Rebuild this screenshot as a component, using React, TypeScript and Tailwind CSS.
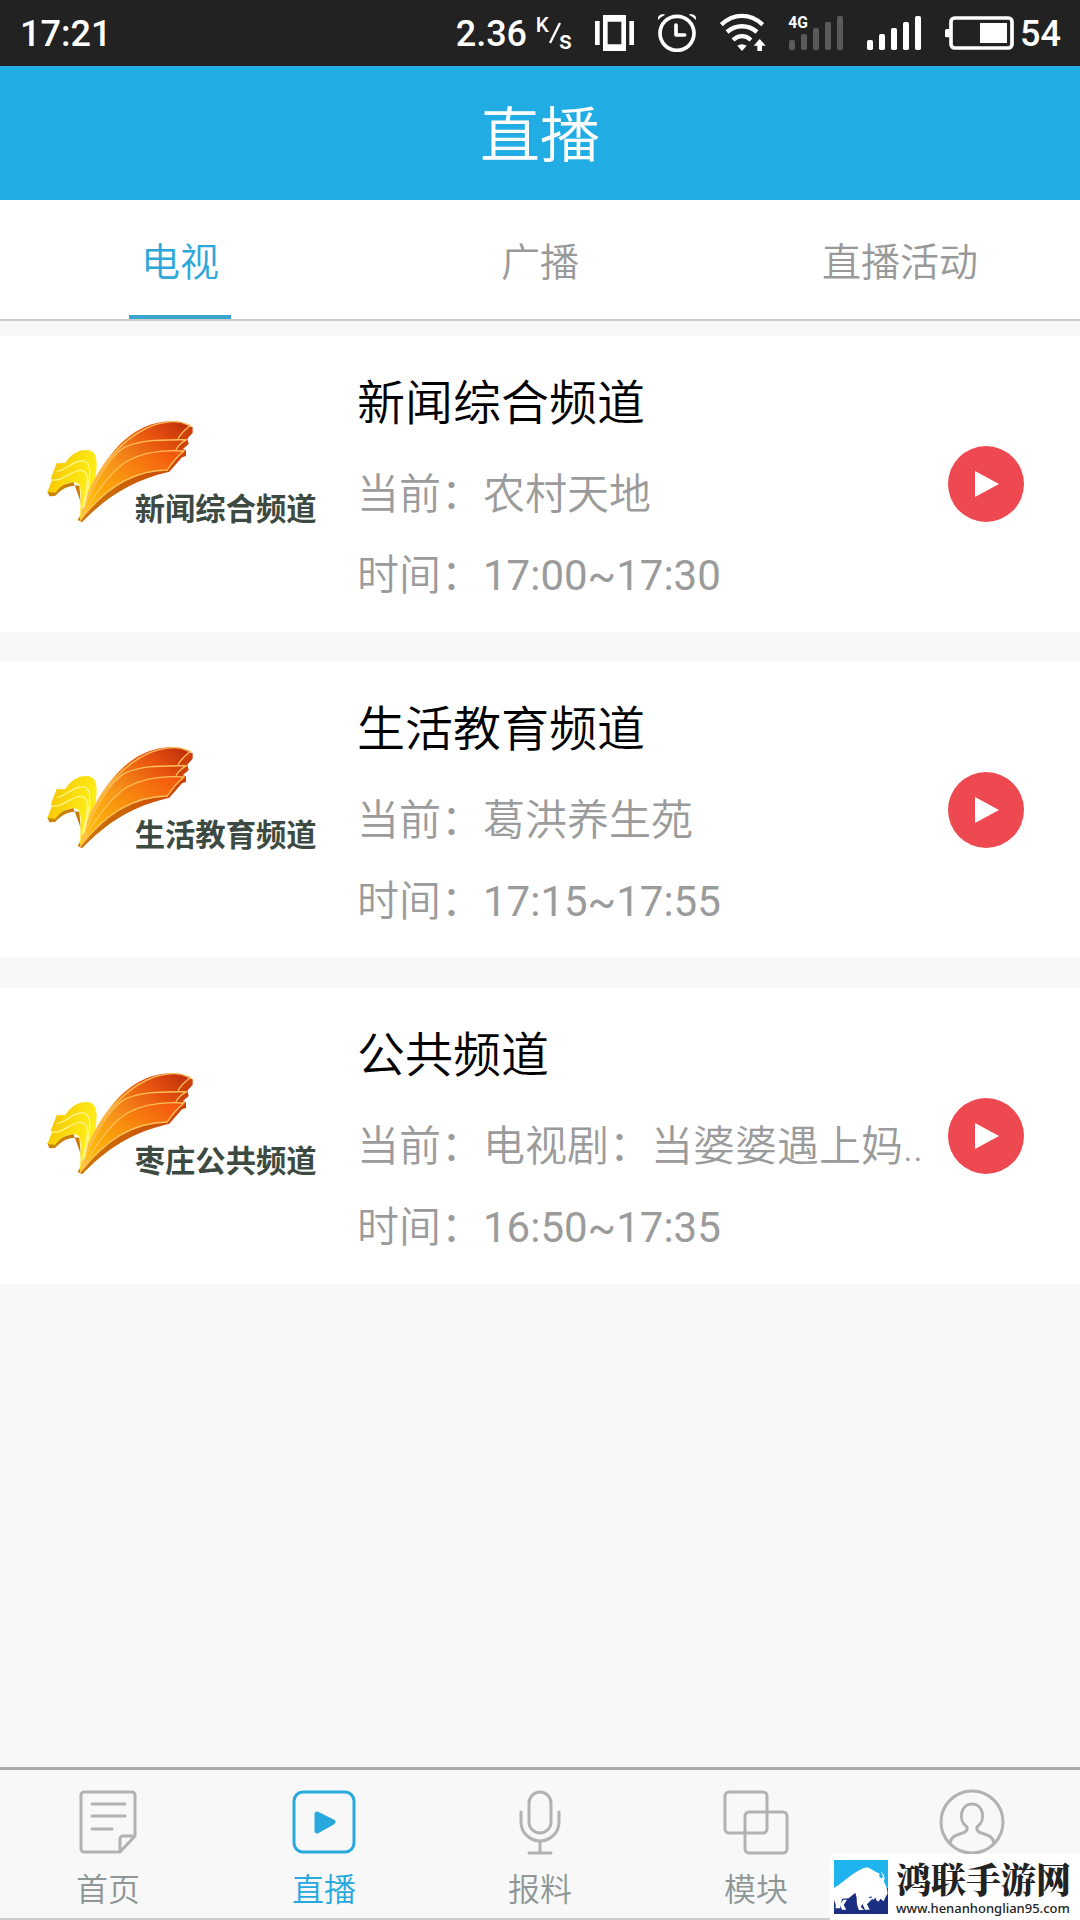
import React, { useState } from 'react';

type Channel = {
  name: string;
  logoText: string;
  current: string;
  time: string;
};

const channels: Channel[] = [
  { name: '新闻综合频道', logoText: '新闻综合频道', current: '农村天地', time: '17:00~17:30' },
  { name: '生活教育频道', logoText: '生活教育频道', current: '葛洪养生苑', time: '17:15~17:55' },
  { name: '公共频道', logoText: '枣庄公共频道', current: '电视剧：当婆婆遇上妈..', time: '16:50~17:35' },
];

const tabs = ['电视', '广播', '直播活动'];

const SignalBars: React.FC<{ color: string; label?: string }> = ({ color, label }) => (
  <svg className="w-[54px] h-[36px] overflow-visible" viewBox="0 0 162 108">
    <g fill={color}>
      <rect x="0" y="75" width="18" height="30" rx="5" />
      <rect x="36" y="57" width="18" height="48" rx="5" />
      <rect x="72" y="39" width="18" height="66" rx="5" />
      <rect x="108" y="21" width="18" height="84" rx="5" />
      <rect x="144" y="3" width="18" height="102" rx="5" />
    </g>
    {label && (
      <text x="-2" y="38" fill="#fff" fontSize="47" fontWeight="700" fontFamily="Roboto, sans-serif">
        {label}
      </text>
    )}
  </svg>
);

const StatusBar: React.FC = () => (
  <div className="h-[66px] bg-[#222222] text-white flex items-center justify-between pl-5 pr-[19px] font-medium text-[36px] leading-[66px]">
    <span className="pt-px">17:21</span>
    <div className="flex items-center gap-6">
      <div className="flex items-center gap-2">
        <span className="pt-px">2.36</span>
        <svg className="w-[36px] h-[36px] overflow-visible" viewBox="0 0 108 108" fill="#fff" fontFamily="Roboto, sans-serif">
          <text x="2" y="52" fontSize="62" fontWeight="500">K</text>
          <path d="M45 84L75 24" stroke="#fff" strokeWidth="7" />
          <text x="72" y="101" fontSize="76" fontWeight="500">s</text>
        </svg>
      </div>
      {/* Vibrate */}
      <svg className="w-[39px] h-[36px]" viewBox="0 0 117 108" fill="#fff">
        <rect x="0" y="18" width="14" height="72" />
        <rect x="103" y="18" width="14" height="72" />
        <path fillRule="evenodd" d="M24 0h69v108H24zM38 20v68h41V20z" />
      </svg>
      {/* Alarm */}
      <svg className="w-[38px] h-[38px]" viewBox="0 0 114 114" fill="none" stroke="#fff">
        <circle cx="57" cy="58" r="51" strokeWidth="11" />
        <path d="M54 33v30h26" strokeWidth="11" strokeLinecap="round" strokeLinejoin="round" />
        <path d="M0 18V9Q4 1 14 0L22 2Q8 8 0 18ZM114 18V9Q110 1 100 0L92 2Q106 8 114 18Z" fill="#fff" stroke="none" />
      </svg>
      {/* Wifi */}
      <svg className="w-[45px] h-[38px] overflow-visible" viewBox="0 0 135 114" fill="none" stroke="#fff" strokeWidth="13">
        <path d="M4 32C41-3 91-3 128 32" />
        <path d="M21 54C48 31 84 31 111 54" />
        <path d="M39 78C56 63 76 63 93 78" />
        <path d="M52 95Q66 86 80 95L66 111Z" fill="#fff" stroke="none" />
        <path d="M119 75L137 95H126V111H112V95H101Z" fill="#fff" stroke="none" />
      </svg>
      <SignalBars color="#5a5a5a" label="4G" />
      <SignalBars color="#ffffff" />
      <div className="flex items-center gap-[6px]">
        <svg className="w-[69px] h-[34px]" viewBox="0 0 207 102" fill="#fff">
          <rect x="18" y="6" width="183" height="90" rx="11" fill="none" stroke="#fff" strokeWidth="11" />
          <rect x="0" y="39" width="16" height="25" rx="5" />
          <rect x="105" y="21" width="81" height="60" />
        </svg>
        <span className="pt-px">54</span>
      </div>
    </div>
  </div>
);

const ChannelLogo: React.FC<{ text: string }> = ({ text }) => (
  <svg className="w-[310px] h-[150px] shrink-0" viewBox="0 0 930 450">
    <defs>
      <linearGradient id="wing" x1="0" y1="1" x2="1" y2="0">
        <stop offset="0" stopColor="#ffd400" />
        <stop offset="0.45" stopColor="#f7921a" />
        <stop offset="0.75" stopColor="#e8540f" />
        <stop offset="1" stopColor="#b82a0c" />
      </linearGradient>
      <linearGradient id="wingFront" x1="0" y1="1" x2="1" y2="0">
        <stop offset="0" stopColor="#ffcf00" />
        <stop offset="0.5" stopColor="#f9930f" />
        <stop offset="1" stopColor="#f2500f" />
      </linearGradient>
      <linearGradient id="tail" x1="0" y1="0" x2="1" y2="0.5">
        <stop offset="0" stopColor="#f5bd00" />
        <stop offset="0.6" stopColor="#fbe010" />
        <stop offset="1" stopColor="#fff21a" />
      </linearGradient>
      <linearGradient id="edge" x1="0" y1="0" x2="1" y2="0">
        <stop offset="0" stopColor="#c98a08" />
        <stop offset="1" stopColor="#cf3d08" />
      </linearGradient>
    </defs>
    {/* Shaded lower edge */}
    <path fill="url(#edge)" d="M52 274L58 289L75 288C98 265 118 255 148 257L155 340L143 360L156 367C235 285 310 240 418 215L456 172L468 168V150L458 148L476 132L472 116L488 98V82L470 76L400 180L150 300L130 245L75 262Z" />
    {/* Tail */}
    <path fill="url(#tail)" d="M80 190L106 189C125 156 160 143 184 153C204 163 202 196 195 245L150 362C151 325 154 285 150 258C143 238 100 244 76 278L52 276L66 240L62 236Z" />
    {/* Wing */}
    <path fill="url(#wing)" d="M150 362C158 300 196 220 246 160C300 90 378 54 452 66L482 76C468 87 452 100 446 115L470 118C456 126 444 138 438 149L462 153C445 167 425 190 412 211C310 217 240 255 150 362Z" />
    <path fill="url(#wingFront)" d="M150 362C180 300 238 216 292 183C342 155 395 148 462 153C445 167 425 190 412 211C310 211 225 262 150 362Z" />
    <g fill="none" stroke="#ffc05a" strokeWidth="4">
      <path d="M154 340C175 265 213 201 250 162C310 96 385 55 455 67L480 77C466 88 452 100 444 116" />
      <path d="M156 342C190 250 238 170 282 143C335 118 390 120 470 119C456 126 444 138 438 149" />
      <path d="M154 355C190 290 240 215 292 183C342 155 395 148 462 153C445 167 425 190 412 210C310 211 225 262 150 362" />
    </g>
    <g fill="none" stroke="#fff68a" strokeWidth="4">
      <path d="M80 214C104 213 122 188 150 183C190 177 184 225 162 320" />
      <path d="M62 240C105 245 120 211 153 211C180 213 176 240 158 325" />
    </g>
    <text x="314" y="361" fontSize="91" fontWeight="700" fill="#3d4a42" fontFamily="'Noto Sans CJK SC', sans-serif">
      {text}
    </text>
  </svg>
);

const ChannelCard: React.FC<{ channel: Channel }> = ({ channel }) => (
  <article className="bg-white flex pl-[30px] pr-14">
    <div className="pt-16">
      <ChannelLogo text={channel.logoText} />
    </div>
    <div className="flex-1 min-w-0 pl-[17px] pt-8 pb-4 whitespace-nowrap">
      <h2 className="text-[48px] leading-[72px] mb-[14px] text-black">{channel.name}</h2>
      <p className="text-[42px] leading-[81px] text-[#9b9b9b]">当前：{channel.current}</p>
      <p className="text-[42px] leading-[81px] text-[#9b9b9b]">
        时间：<span className="font-normal">{channel.time}</span>
      </p>
    </div>
    <button aria-label={`播放${channel.name}`} className="self-center shrink-0 w-[76px] h-[76px] rounded-full bg-[#ee4850]">
      <svg className="w-full h-full" viewBox="0 0 76 76">
        <path d="M27 25L51 38L27 51Z" fill="#fff" />
      </svg>
    </button>
  </article>
);

const navItems = [
  {
    label: '首页',
    icon: (
      <>
        <path d="M59 46V5a3 3 0 00-3-3H8a3 3 0 00-3 3v54a3 3 0 003 3h36L59 46H47a3 3 0 00-3 3v13" />
        <path d="M16 14h33M16 26h33M16 39h20" strokeLinecap="round" />
      </>
    ),
  },
  {
    label: '直播',
    icon: (
      <>
        <rect x="2" y="2" width="60" height="60" rx="9" />
        <path d="M25 24L41 32L25 41Z" fill="currentColor" strokeWidth="5" />
      </>
    ),
  },
  {
    label: '报料',
    icon: (
      <>
        <rect x="21" y="2" width="22" height="41" rx="11" />
        <path d="M13 22v10a19 19 0 0038 0V22M32 52v11M21 63h22" strokeLinecap="round" />
      </>
    ),
  },
  {
    label: '模块',
    icon: (
      <>
        <rect x="1" y="2" width="42" height="41" rx="4" />
        <rect x="21" y="22" width="42" height="41" rx="4" />
      </>
    ),
  },
  {
    label: '我的',
    icon: (
      <>
        <circle cx="32" cy="32" r="31" />
        <path d="M10 53C12 41 29 46 27 37C18 31 20 14 32 14S46 31 37 37C35 46 52 41 54 53" />
      </>
    ),
  },
];

const SiteBadge: React.FC = () => (
  <a href="#" className="absolute right-0 bottom-0 w-[250px] h-[66px] bg-white flex items-center gap-2 pl-1 text-[#222222]">
    <svg className="w-[54px] h-[54px] shrink-0" viewBox="0 0 162 162">
      <path fill="#1fb4ed" d="M0 0H162V162H0Z" />
      <path fill="#1b2f80" d="M0 85H162V162H0Z" />
      <path fill="#fff" d="M0 84C35 64 60 32 98 22C112 25 126 38 137 41C133 48 139 59 145 53C149 49 143 38 139 34C152 42 154 56 149 64C158 78 165 104 157 106L149 124L139 116C132 132 126 121 124 112C119 125 113 118 112 109L98 116L80 140L90 150H75C70 139 68 132 68 113L64 98L44 115L24 116L18 145H4C9 134 0 126 0 117Z" />
      <path fill="#fff" d="M18 135L28 119H39L29 135L37 149H24ZM86 133L98 114H117L99 133L107 149H93Z" />
    </svg>
    <div className="whitespace-nowrap">
      <div className="text-[35px] leading-[42px] font-black font-['Noto_Serif_CJK_SC','Noto_Sans_CJK_SC',serif]">鸿联手游网</div>
      <div className="text-[13px] leading-[18px] font-medium font-['Noto_Sans',sans-serif]">www.henanhonglian95.com</div>
    </div>
  </a>
);

const App: React.FC = () => {
  const [activeTab, setActiveTab] = useState(0);
  const [activeNav, setActiveNav] = useState(1);

  return (
    <div className="min-h-screen flex flex-col bg-[#f8f8f8] font-[350] font-[Roboto,'Noto_Sans_CJK_SC',sans-serif]">
      <StatusBar />

      <header className="bg-[#22ace4] h-[134px] pt-2 flex items-center justify-center">
        <h1 className="text-white text-[60px] leading-[80px]">直播</h1>
      </header>

      {/* Tabs */}
      <div className="grid grid-cols-3 h-[121px] bg-white border-b-2 border-[#cccccc]">
        {tabs.map((tab, i) => (
          <button
            key={tab}
            onClick={() => setActiveTab(i)}
            className={`flex flex-col items-center justify-between pt-[33px] text-[39px] leading-[60px] ${i === activeTab ? 'text-[#2ea7d9]' : 'text-[#999999]'}`}
          >
            {tab}
            <span className={`w-[102px] h-1 ${i === activeTab ? 'bg-[#38a5d2]' : 'bg-transparent'}`} />
          </button>
        ))}
      </div>

      <main className="flex-1 flex flex-col gap-[30px] pt-[15px]">
        {channels.map((channel) => (
          <ChannelCard key={channel.name} channel={channel} />
        ))}
      </main>

      <footer className="relative">
        <nav className="grid grid-cols-5 border-t-3 border-t-[#aaaaaa] border-b-2 border-b-[#cccccc]">
          {navItems.map((item, i) => (
            <button
              key={item.label}
              aria-label={item.label}
              onClick={() => setActiveNav(i)}
              className={`flex flex-col items-center justify-start pt-5 pb-2 ${i === activeNav ? 'text-[#28a9de]' : 'text-[#b2b2b2]'}`}
            >
              <svg className="w-16 h-16 overflow-visible" viewBox="0 0 64 64" fill="none" stroke="currentColor" strokeWidth="3" strokeLinejoin="round">
                {item.icon}
              </svg>
              {i < 4 && (
                <span className={`mt-4 text-[32px] leading-[40px] ${i === activeNav ? 'text-[#28a9de]' : 'text-[#8e9696]'}`}>
                  {item.label}
                </span>
              )}
            </button>
          ))}
        </nav>
        <SiteBadge />
      </footer>
    </div>
  );
};

export default App;
